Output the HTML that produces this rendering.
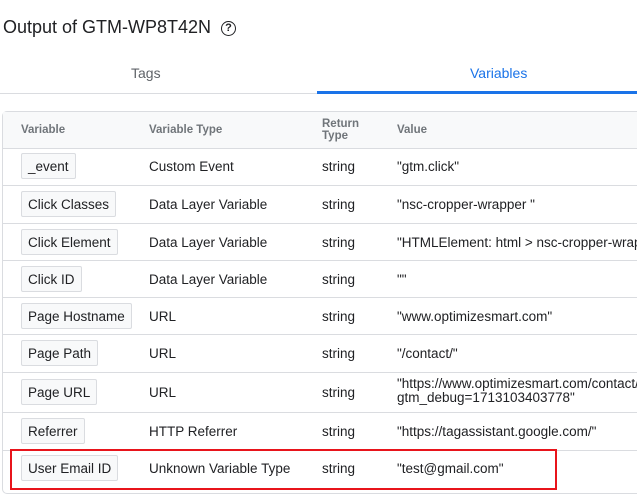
<!DOCTYPE html>
<html><head><meta charset="utf-8"><style>
body{margin:0;width:637px;height:500px;background:#fff;font-family:"Liberation Sans",Arial,sans-serif;color:#202124;position:relative;overflow:hidden}
.a{position:absolute;white-space:nowrap}
.t{font-size:18px;top:17px;left:3px;color:#202124}
.tab{font-size:14px;top:65px}
.box{position:absolute;left:2px;top:111px;width:640px;height:381px;border:1px solid #dadce0;border-radius:5px;border-right:none}
.hdr{position:absolute;left:3px;top:112px;width:640px;height:36px;background:#f8f9fa;border-bottom:1px solid #dadce0}
.h{font-size:11.5px;color:#70757a;font-weight:bold}
.line{position:absolute;left:3px;width:640px;height:1px;background:#dadce0}
.chip{position:absolute;left:21px;height:26px;line-height:25px;padding:0 6px;border:1px solid #dadce0;border-radius:2px;background:#f8f9fa;font-size:13.5px;box-sizing:border-box}
.c{font-size:13.5px}
</style></head><body>
<div class="a t">Output of GTM-WP8T42N</div>
<div class="a" style="left:221px;top:21px;width:13px;height:13px;border:1.6px solid #202124;border-radius:50%;font-size:11px;line-height:13px;text-align:center;font-weight:bold">?</div>
<div class="a tab" style="left:131px;color:#5f6368">Tags</div>
<div class="a tab" style="left:470px;color:#1a73e8">Variables</div>
<div class="a" style="left:0;top:93px;width:637px;height:1px;background:#dadce0"></div>
<div class="a" style="left:317px;top:91px;width:320px;height:3px;background:#1a73e8"></div>
<div class="box"></div>
<div class="hdr"></div>
<div class="a h" style="left:21px;top:124px">Variable</div>
<div class="a h" style="left:149px;top:124px">Variable Type</div>
<div class="a h" style="left:322px;top:118px;line-height:12px">Return<br>Type</div>
<div class="a h" style="left:397px;top:124px">Value</div>

<div class="line" style="top:185px"></div><div class="line" style="top:223px"></div><div class="line" style="top:260px"></div><div class="line" style="top:297px"></div><div class="line" style="top:334px"></div><div class="line" style="top:372px"></div><div class="line" style="top:412px"></div><div class="line" style="top:450px"></div>

<div class="chip" style="top:153px">_event</div><div class="a c" style="left:149px;top:159px">Custom Event</div><div class="a c" style="left:322px;top:159px">string</div><div class="a c" style="left:397px;top:159px">"gtm.click"</div>
<div class="chip" style="top:191px">Click Classes</div><div class="a c" style="left:149px;top:197px">Data Layer Variable</div><div class="a c" style="left:322px;top:197px">string</div><div class="a c" style="left:397px;top:197px">"nsc-cropper-wrapper "</div>
<div class="chip" style="top:229px">Click Element</div><div class="a c" style="left:149px;top:235px">Data Layer Variable</div><div class="a c" style="left:322px;top:235px">string</div><div class="a c" style="left:397px;top:235px">"HTMLElement: html &gt; nsc-cropper-wrapper"</div>
<div class="chip" style="top:266px">Click ID</div><div class="a c" style="left:149px;top:272px">Data Layer Variable</div><div class="a c" style="left:322px;top:272px">string</div><div class="a c" style="left:397px;top:272px">""</div>
<div class="chip" style="top:303px">Page Hostname</div><div class="a c" style="left:149px;top:309px">URL</div><div class="a c" style="left:322px;top:309px">string</div><div class="a c" style="left:397px;top:309px">"www.optimizesmart.com"</div>
<div class="chip" style="top:340px">Page Path</div><div class="a c" style="left:149px;top:346px">URL</div><div class="a c" style="left:322px;top:346px">string</div><div class="a c" style="left:397px;top:346px">"/contact/"</div>
<div class="chip" style="top:379px">Page URL</div><div class="a c" style="left:149px;top:385px">URL</div><div class="a c" style="left:322px;top:385px">string</div><div class="a c" style="left:397px;top:377px;line-height:14px">"https://www.optimizesmart.com/contact/?<br>gtm_debug=1713103403778"</div>
<div class="chip" style="top:418px">Referrer</div><div class="a c" style="left:149px;top:424px">HTTP Referrer</div><div class="a c" style="left:322px;top:424px">string</div><div class="a c" style="left:397px;top:424px">"https://tagassistant.google.com/"</div>
<div class="chip" style="top:455px">User Email ID</div><div class="a c" style="left:149px;top:461px">Unknown Variable Type</div><div class="a c" style="left:322px;top:461px">string</div><div class="a c" style="left:397px;top:461px">"test@gmail.com"</div>
<div class="a" style="left:10px;top:449px;width:543px;height:37px;border:2px solid #e8141b"></div>
</body></html>
